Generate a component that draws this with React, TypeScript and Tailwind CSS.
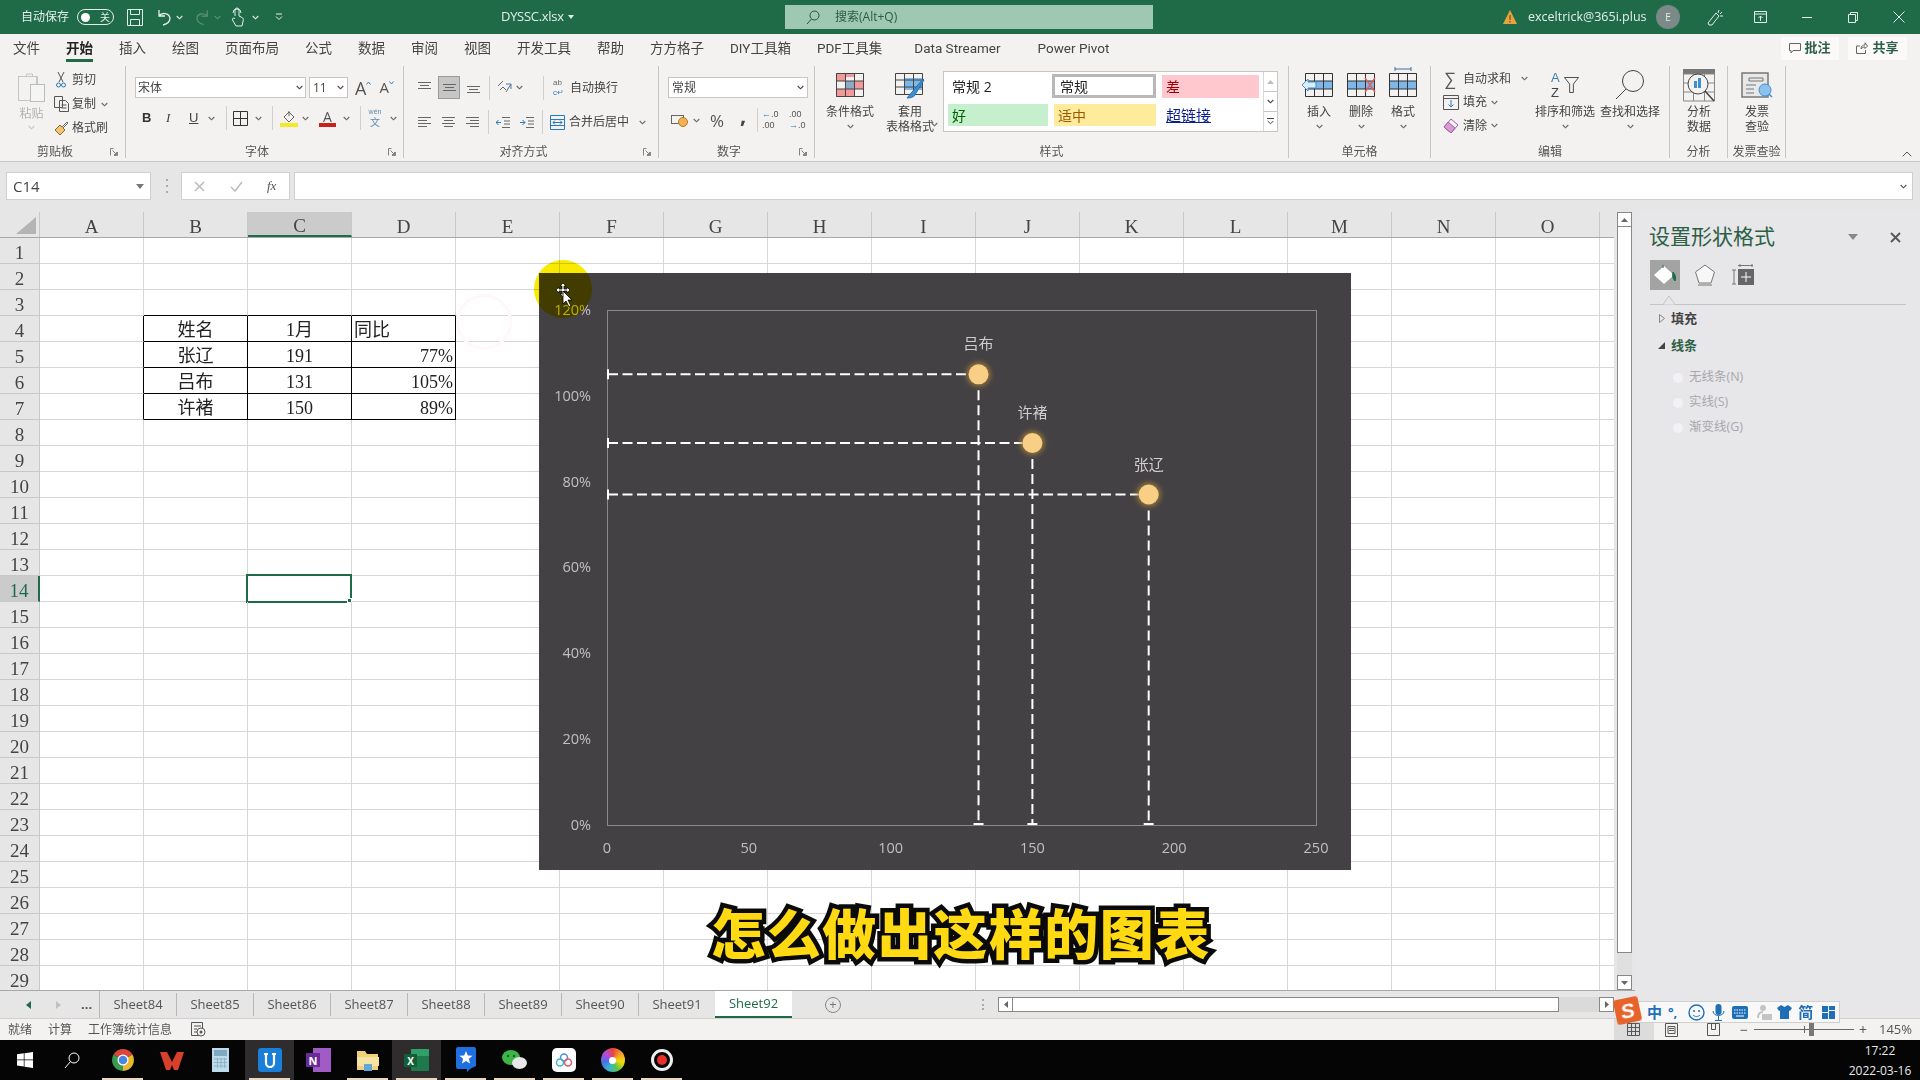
import type { ReactNode } from "react";

const columns = ["A", "B", "C", "D", "E", "F", "G", "H", "I", "J", "K", "L", "M", "N", "O", ""];
const rows = Array.from({ length: 29 }, (_, i) => i + 1);
const sheets = ["Sheet84", "Sheet85", "Sheet86", "Sheet87", "Sheet88", "Sheet89", "Sheet90", "Sheet91"];

const tableData: Record<string, { text: string; align: string }> = {
  "4-1": { text: "姓名", align: "justify-center" },
  "4-2": { text: "1月", align: "justify-center" },
  "4-3": { text: "同比", align: "justify-start" },
  "5-1": { text: "张辽", align: "justify-center" },
  "5-2": { text: "191", align: "justify-center" },
  "5-3": { text: "77%", align: "justify-end" },
  "6-1": { text: "吕布", align: "justify-center" },
  "6-2": { text: "131", align: "justify-center" },
  "6-3": { text: "105%", align: "justify-end" },
  "7-1": { text: "许褚", align: "justify-center" },
  "7-2": { text: "150", align: "justify-center" },
  "7-3": { text: "89%", align: "justify-end" },
};

function Chev({ color = "#666" }: { color?: string }) {
  return (
    <svg width="7" height="5" viewBox="0 0 7 5" className="shrink-0">
      <path d="M.7 1l2.8 2.8L6.3 1" stroke={color} strokeWidth="1.1" fill="none" />
    </svg>
  );
}

function Launcher() {
  return (
    <svg width="8" height="8" viewBox="0 0 8 8" className="shrink-0">
      <path d="M.5 7.5v-7h3M7.5 4v3.5H4M2.5 2.5l4 4M6.5 4v2.5H4" stroke="#777" fill="none" strokeWidth=".9" />
    </svg>
  );
}

function Sep() {
  return <div className="w-px h-[24px] bg-[#d2d0ce] shrink-0" />;
}

function Group({ w, title, launcher, children }: { w: string; title: string; launcher?: boolean; children: ReactNode }) {
  return (
    <div className={`${w} h-[92px] shrink-0 flex flex-col border-r border-[#c8c6c4]`}>
      <div className="h-[76px] shrink-0 flex relative">{children}</div>
      <div className="flex items-center h-[16px] pt-[4px]">
        <div className="flex-1 text-center text-[12px] leading-none text-[#555] whitespace-nowrap">{title}</div>
        {launcher && (
          <div className="w-[15px] flex">
            <Launcher />
          </div>
        )}
      </div>
    </div>
  );
}

function BigBtn({ w, icon, lines, chev }: { w: string; icon: ReactNode; lines: string[]; chev?: boolean }) {
  return (
    <div className={`${w} flex flex-col items-center shrink-0`}>
      <div className="h-[38px] flex items-center justify-center">{icon}</div>
      {lines.map((l) => (
        <div key={l} className="text-[12px] leading-[15px] whitespace-nowrap text-[#444]">
          {l}
        </div>
      ))}
      {chev && (
        <div className="h-[15px] flex items-center">
          <Chev />
        </div>
      )}
    </div>
  );
}

function AlignLines({ kind }: { kind: string }) {
  const d: Record<string, string> = {
    top: "M1 1.5h13M3 4.5h9M1 7.5h13",
    mid: "M1 3.5h13M3 6.5h9M1 9.5h13",
    bot: "M1 5.5h13M3 8.5h9M1 11.5h13",
    left: "M1 1.5h13M1 4.5h9M1 7.5h13M1 10.5h9",
    center: "M1 1.5h13M3 4.5h9M1 7.5h13M3 10.5h9",
    right: "M1 1.5h13M5 4.5h9M1 7.5h13M5 10.5h9",
  };
  return (
    <svg width="15" height="13" viewBox="0 0 15 13" className="shrink-0">
      <path d={d[kind]} stroke="#666" fill="none" />
    </svg>
  );
}

function Cells({ fill, mark }: { fill: string; mark?: ReactNode }) {
  return (
    <svg width="32" height="24" viewBox="0 0 32 24" className="overflow-visible">
      <rect x="2" y="8" width="28" height="8" fill={fill} />
      <path d="M2.5 .5h27v23h-27zM2 8h28M2 16h28M11.5 0v24M20.5 0v24" stroke="#333" fill="none" />
      {mark}
    </svg>
  );
}

function Titlebar() {
  return (
    <div className="h-[34px] bg-[#1f6b48] flex items-center shrink-0 text-[#e4eee9] relative">
      <span className="ml-[21px] text-[12px] w-[48px] whitespace-nowrap">自动保存</span>
      <div className="ml-[8px] w-[37px] h-[16px] rounded-full border border-[#e4eee9] flex items-center justify-between pl-[3px] pr-[3px]">
        <div className="w-[9px] h-[9px] rounded-full bg-white" />
        <span className="text-[10px] leading-none">关</span>
      </div>
      <svg className="ml-[13px]" width="16" height="17" viewBox="0 0 16 17">
        <path d="M.5.5h15v16H.5zM3.5.5v5h9v-5M3.5 16.5v-6h9v6" stroke="#e4eee9" fill="none" />
      </svg>
      <svg className="ml-[12px]" width="16" height="17" viewBox="0 0 16 17">
        <path d="M4 1v6h6M4 7c3-4 10-3 11 2 0 4-3 6-7 7" stroke="#e4eee9" fill="none" strokeWidth="1.3" />
      </svg>
      <div className="ml-[5px]">
        <Chev color="#e4eee9" />
      </div>
      <svg className="ml-[13px] opacity-30" width="15" height="17" viewBox="0 0 16 17">
        <path d="M12 1v6H6M12 7C9 3 2 4 1 9c0 4 3 6 7 7" stroke="#e4eee9" fill="none" strokeWidth="1.3" />
      </svg>
      <div className="ml-[3px] opacity-30">
        <Chev color="#e4eee9" />
      </div>
      <svg className="ml-[10px]" width="13" height="20" viewBox="0 0 13 20">
        <path d="M4 9V3a2 2 0 014 0v6l3 1.5c1 .5 1.5 1.5 1.3 2.5L11 19H5L1.5 13c-.8-1.5 1-2.5 2.5-1.5M2 6a4 4 0 018 0" stroke="#e4eee9" fill="none" />
      </svg>
      <div className="ml-[8px]">
        <Chev color="#e4eee9" />
      </div>
      <svg className="ml-[16px]" width="8" height="8" viewBox="0 0 8 8">
        <path d="M1 1h6M1 3.5l3 3 3-3" stroke="#e4eee9" fill="none" />
      </svg>
      <span className="ml-[218px] text-[13px] tracking-[-.3px] w-[62px] whitespace-nowrap">DYSSC.xlsx</span>
      <div className="ml-[5px]">
        <svg width="6" height="4" viewBox="0 0 6 4">
          <path d="M0 0h6L3 4z" fill="#e4eee9" />
        </svg>
      </div>
      <div className="ml-[211px] w-[368px] h-[24px] bg-[#9ec8b1] flex items-center shrink-0">
        <svg className="ml-[21px]" width="14" height="15" viewBox="0 0 14 15">
          <circle cx="8.5" cy="5.5" r="4.5" stroke="#23563d" fill="none" />
          <path d="M5.5 9L1 14" stroke="#23563d" />
        </svg>
        <span className="ml-[15px] text-[12px] text-[#2c5c43]">搜索(Alt+Q)</span>
      </div>
      <svg className="ml-[350px]" width="14" height="14" viewBox="0 0 14 14">
        <path d="M7 0l7 14H0z" fill="#e7a33e" />
        <path d="M7 5v5M7 11v1.5" stroke="#5a3b10" />
      </svg>
      <span className="ml-[11px] text-[12.5px] w-[117px] whitespace-nowrap">exceltrick@365i.plus</span>
      <div className="ml-[11px] w-[24px] h-[24px] rounded-full bg-[#7b8a88] flex items-center justify-center text-[10px]">E</div>
      <svg className="ml-[27px]" width="17" height="17" viewBox="0 0 17 17">
        <path d="M1 14l8-10 3 3-7 9H2zM12 1l-1 3M15 3l-2 2M16 7h-3" stroke="#e4eee9" fill="none" />
      </svg>
      <svg className="ml-[30px]" width="13" height="12" viewBox="0 0 13 12">
        <path d="M.5.5h12v11H.5zM.5 3h12M6.5 10V5M4.5 7l2-2 2 2" stroke="#e4eee9" fill="none" />
      </svg>
      <div className="ml-[35px] w-[10px] h-px bg-[#e4eee9]" />
      <svg className="ml-[36px]" width="10" height="11" viewBox="0 0 10 11">
        <path d="M.5 2.5h7v8h-7zM2.5 2.5v-2h7v8h-2" stroke="#e4eee9" fill="none" />
      </svg>
      <svg className="ml-[35px]" width="12" height="12" viewBox="0 0 12 12">
        <path d="M.5.5l11 11M11.5.5l-11 11" stroke="#e4eee9" />
      </svg>
    </div>
  );
}

function TabRow() {
  const tabs = ["文件", "开始", "插入", "绘图", "页面布局", "公式", "数据", "审阅", "视图", "开发工具", "帮助", "方方格子", "DIY工具箱", "PDF工具集"];
  return (
    <div className="h-[28px] flex items-stretch pl-[13px] gap-[26px] text-[13.5px] text-[#444] whitespace-nowrap [font-family:'Roboto','Noto_Sans_CJK_SC',sans-serif]">
      {tabs.map((t) => (
        <div
          key={t}
          className={`flex items-center pt-[3px] border-b-[3px] ${t === "开始" ? "border-[#1f6b48] font-bold text-[#222]" : "border-transparent"}`}
        >
          {t}
        </div>
      ))}
      <div className="flex items-center pt-[3px] border-b-[3px] border-transparent ml-[6px]">Data Streamer</div>
      <div className="flex items-center pt-[3px] border-b-[3px] border-transparent ml-[11px]">Power Pivot</div>
      <div className="ml-auto mr-[13px] flex items-center gap-[9px] text-[13px] font-bold text-[#2d5e47]">
        <div className="w-[58px] h-[23px] bg-[#fbfaf9] flex items-center justify-center gap-[3px]">
          <svg width="12" height="11" viewBox="0 0 12 11">
            <path d="M.5.5h11v7H4l-2 2.5v-2.5H.5z" stroke="#666" fill="none" />
          </svg>
          批注
        </div>
        <div className="w-[59px] h-[23px] bg-[#fbfaf9] flex items-center justify-center gap-[4px]">
          <svg width="12" height="12" viewBox="0 0 12 12">
            <path d="M4 4H.5v7.5h9V8M5 7c0-3 2-4 4-4V.8L11.5 4 9 6.5V5C7.5 5 6 5.5 5 7z" stroke="#666" fill="none" />
          </svg>
          共享
        </div>
      </div>
    </div>
  );
}

function Ribbon() {
  return (
    <div className="h-[100px] flex pt-[4px] text-[12px] text-[#444] relative border-b border-[#c8c6c4]">
      <Group w="w-[126px]" title="剪贴板" launcher>
        <div className="w-[43px] ml-[10px] flex flex-col items-center opacity-60">
          <svg className="mt-[6px]" width="27" height="30" viewBox="0 0 27 30">
            <path d="M3.5 4.5h5V2h6v2.5h5v8" stroke="#aaa" fill="#f3f2f1" />
            <rect x=".5" y="4.5" width="18" height="24" stroke="#aaa" fill="none" />
            <rect x="12.5" y="12.5" width="14" height="17" stroke="#999" fill="#f8f8f8" />
          </svg>
          <span className="mt-[4px] text-[12px] leading-[15px] text-[#888]">粘贴</span>
          <div className="mt-[4px]">
            <Chev color="#aaa" />
          </div>
        </div>
        <div className="ml-[1px] pt-[2px] flex flex-col">
          <div className="h-[24px] flex items-center">
            <svg className="ml-[2px]" width="10" height="16" viewBox="0 0 10 16">
              <path d="M2 0l5 10M8 0L3 10" stroke="#555" fill="none" />
              <circle cx="2.5" cy="13" r="2" stroke="#2a7ab8" fill="none" />
              <circle cx="7.5" cy="13" r="2" stroke="#2a7ab8" fill="none" />
            </svg>
            <span className="ml-[6px]">剪切</span>
          </div>
          <div className="h-[24px] flex items-center">
            <svg width="15" height="16" viewBox="0 0 15 16">
              <path d="M.5.5h8v11h-8zM5.5 4.5h6l3 3v8h-9zM7.5 9h5M7.5 12h5" stroke="#555" fill="#f3f2f1" />
            </svg>
            <span className="ml-[3px]">复制</span>
            <div className="ml-[5px]">
              <Chev />
            </div>
          </div>
          <div className="h-[24px] flex items-center">
            <svg width="15" height="15" viewBox="0 0 15 15">
              <path d="M1 9l5-5 5 5-5 5z" fill="#f2c66f" stroke="#8a6a2a" />
              <path d="M8 6l5-5 1 1-5 5" fill="#fff" stroke="#666" />
            </svg>
            <span className="ml-[3px]">格式刷</span>
          </div>
        </div>
      </Group>

      <Group w="w-[278px]" title="字体" launcher>
        <div className="flex flex-col pt-[11px]">
          <div className="flex items-center h-[21px]">
            <div className="ml-[9px] w-[171px] h-[21px] bg-white border border-[#c8c6c4] flex items-center justify-between px-[2px] text-[12px]">
              宋体
              <Chev color="#444" />
            </div>
            <div className="ml-[3px] w-[39px] h-[21px] bg-white border border-[#c8c6c4] flex items-center justify-between pl-[3px] pr-[3px] text-[12px]">
              11
              <Chev color="#444" />
            </div>
            <span className="ml-[7px] text-[18px] leading-none text-[#555]">A</span>
            <svg className="mb-[10px]" width="5" height="4" viewBox="0 0 5 4">
              <path d="M.5 3.5l2-2.5 2 2.5" stroke="#3b7fb5" fill="none" />
            </svg>
            <span className="ml-[8px] text-[15px] leading-none text-[#555]">A</span>
            <svg className="mb-[10px]" width="5" height="4" viewBox="0 0 5 4">
              <path d="M.5.5l2 2.5 2-2.5" stroke="#3b7fb5" fill="none" />
            </svg>
          </div>
          <div className="flex items-center h-[24px] mt-[8px]">
            <span className="ml-[16px] w-[8px] font-bold text-[13px] text-[#333] [font-family:'Liberation_Sans',sans-serif]">B</span>
            <span className="ml-[16px] w-[7px] italic text-[13px] [font-family:'Liberation_Serif',serif]">I</span>
            <span className="ml-[16px] w-[9px] underline text-[13px] [font-family:'Liberation_Sans',sans-serif]">U</span>
            <div className="ml-[10px]">
              <Chev />
            </div>
            <div className="ml-[11px]">
              <Sep />
            </div>
            <svg className="ml-[6px]" width="15" height="15" viewBox="0 0 15 15">
              <path d="M.5.5h14v14H.5zM7.5 0v15M0 7.5h15" stroke="#333" fill="none" />
            </svg>
            <div className="ml-[7px]">
              <Chev />
            </div>
            <div className="ml-[10px]">
              <Sep />
            </div>
            <svg className="ml-[7px]" width="18" height="17" viewBox="0 0 18 17">
              <path d="M4 7l5-5 5 5-5 5z" stroke="#666" fill="none" />
              <path d="M9 1v5" stroke="#666" />
              <rect y="13" width="18" height="4" fill="#f5e829" />
            </svg>
            <div className="ml-[4px]">
              <Chev />
            </div>
            <div className="ml-[10px] w-[17px] flex flex-col items-center leading-none">
              <span className="text-[14px] leading-[13px] text-[#555]">A</span>
              <div className="w-[17px] h-[4px] bg-[#c9201c]" />
            </div>
            <div className="ml-[7px]">
              <Chev />
            </div>
            <div className="ml-[10px]">
              <Sep />
            </div>
            <div className="ml-[7px] w-[14px] flex flex-col items-center text-[#5a8bb0] [font-family:'Liberation_Sans','Noto_Sans_CJK_SC',sans-serif]">
              <span className="text-[7px] leading-[9px]">wén</span>
              <span className="text-[10px] leading-[14px]">文</span>
            </div>
            <div className="ml-[8px]">
              <Chev />
            </div>
          </div>
        </div>
      </Group>

      <Group w="w-[255px]" title="对齐方式" launcher>
        <div className="flex flex-col pt-[10px]">
          <div className="flex items-center h-[23px]">
            <div className="ml-[13px]">
              <AlignLines kind="top" />
            </div>
            <div className="ml-[6px] w-[22px] h-[23px] bg-[#c6c6c6] border border-[#9a9a9a] flex items-center justify-center">
              <AlignLines kind="mid" />
            </div>
            <div className="ml-[6px]">
              <AlignLines kind="bot" />
            </div>
            <div className="ml-[8px]">
              <Sep />
            </div>
            <svg className="ml-[7px]" width="15" height="15" viewBox="0 0 15 15">
              <path d="M1 6l5-5M3 10l3-3 3 3M9 12l5-8" stroke="#666" fill="none" />
              <path d="M9 4h5v5" stroke="#3b7fb5" fill="none" />
            </svg>
            <div className="ml-[4px]">
              <Chev />
            </div>
            <div className="ml-[20px]">
              <Sep />
            </div>
            <div className="ml-[9px] w-[15px] text-[8px] leading-[10px] text-[#666] [font-family:'Liberation_Sans',sans-serif]">
              ab
              <br />
              <span className="text-[#3b7fb5]">c↵</span>
            </div>
            <span className="ml-[2px] whitespace-nowrap">自动换行</span>
          </div>
          <div className="flex items-center h-[24px] mt-[11px]">
            <div className="ml-[13px]">
              <AlignLines kind="left" />
            </div>
            <div className="ml-[9px]">
              <AlignLines kind="center" />
            </div>
            <div className="ml-[9px]">
              <AlignLines kind="right" />
            </div>
            <div className="ml-[8px]">
              <Sep />
            </div>
            <svg className="ml-[7px]" width="14" height="13" viewBox="0 0 14 13">
              <path d="M6 1.5h8M8 5h6M8 8h6M6 11.5h8" stroke="#666" />
              <path d="M5 6.5H0M2.5 4L0 6.5 2.5 9" stroke="#2a7ab8" fill="none" />
            </svg>
            <svg className="ml-[10px]" width="14" height="13" viewBox="0 0 14 13">
              <path d="M6 1.5h8M8 5h6M8 8h6M6 11.5h8" stroke="#666" />
              <path d="M0 6.5h5M2.5 4L5 6.5 2.5 9" stroke="#2a7ab8" fill="none" />
            </svg>
            <div className="ml-[8px]">
              <Sep />
            </div>
            <svg className="ml-[7px]" width="15" height="15" viewBox="0 0 15 15">
              <path d="M.5.5h14v14H.5zM0 4.5h15M0 10.5h15" stroke="#2a7ab8" fill="none" />
              <path d="M3 7.5h9M5 5.5l-2 2 2 2M10 5.5l2 2-2 2" stroke="#2a7ab8" fill="none" />
            </svg>
            <span className="ml-[4px] whitespace-nowrap">合并后居中</span>
            <div className="ml-[10px]">
              <Chev />
            </div>
          </div>
        </div>
      </Group>

      <Group w="w-[156px]" title="数字" launcher>
        <div className="flex flex-col pt-[11px] pl-[9px]">
          <div className="w-[140px] h-[21px] bg-white border border-[#c8c6c4] flex items-center justify-between px-[3px]">
            常规
            <Chev color="#444" />
          </div>
          <div className="flex items-center h-[24px] mt-[10px]">
            <svg className="ml-[3px]" width="17" height="15" viewBox="0 0 17 15">
              <rect x=".5" y="2.5" width="12" height="8" stroke="#666" fill="none" />
              <circle cx="12" cy="9" r="4.5" fill="#f1b155" stroke="#b87a20" />
            </svg>
            <div className="ml-[5px]">
              <Chev />
            </div>
            <span className="ml-[10px] w-[16px] text-[17px] leading-none text-[#555]">%</span>
            <span className="ml-[14px] w-[9px] text-[22px] font-bold leading-none text-[#444] pb-[12px]">,</span>
            <div className="ml-[8px]">
              <Sep />
            </div>
            <div className="ml-[4px] w-[18px] text-[9px] leading-[11px] text-[#555] [font-family:'Liberation_Sans',sans-serif]">
              <span className="text-[#2a7ab8]">←</span>.0
              <br />
              .00
            </div>
            <div className="ml-[9px] w-[16px] text-[9px] leading-[11px] text-[#555] [font-family:'Liberation_Sans',sans-serif]">
              .00
              <br />
              <span className="text-[#2a7ab8]">→</span>.0
            </div>
          </div>
        </div>
      </Group>

      <Group w="w-[474px]" title="样式">
        <div className="ml-[7px]">
          <BigBtn
            w="w-[56px]"
            lines={["条件格式"]}
            chev
            icon={
              <svg width="28" height="24" viewBox="0 0 28 24">
                <path d="M0 0h9v8H0zM9 0h9v4H9zM0 16h18v8H0zM18 8h10v8H18z" fill="#f29a9a" />
                <rect x="9" y="8" width="9" height="8" fill="#8ea9c8" />
                <path d="M.5.5h27v23H.5zM0 8h28M0 16h28M9.5 0v24M18.5 0v24" stroke="#444" fill="none" />
              </svg>
            }
          />
        </div>
        <div className="ml-[2px]">
          <BigBtn
            w="w-[60px]"
            lines={["套用", "表格格式"]}
            icon={
              <svg width="30" height="28" viewBox="0 0 30 28">
                <rect x="10" y="7" width="18" height="12" fill="#7db7ea" />
                <path d="M.5 2.5h27v21H.5zM0 9h28M0 16h28M9.5 2v22M18.5 2v22" stroke="#444" fill="none" />
                <path d="M28 8L17 21l-5 6c4 0 8-1 9-5l8-13z" fill="#3d8fd1" stroke="#2a6fa8" />
              </svg>
            }
          />
        </div>
        <div className="absolute left-[116px] top-[56px]">
          <Chev />
        </div>
        <div className="ml-[3px] mt-[5px] w-[335px] h-[61px] bg-white border border-[#c8c6c4] flex">
          <div className="w-[320px] pl-[4px] pt-[3px] grid grid-cols-[100px_108px_99px] grid-rows-[23px_22px] gap-y-[6px] gap-x-[2px] text-[14px]">
            <div className="flex items-center pl-[4px] text-[#222]">常规 2</div>
            <div className="flex items-center pl-[5px] text-[#222] border-[3px] border-[#b8b8b8] bg-white -mt-[1px] ml-[2px] mr-[2px]">常规</div>
            <div className="flex items-center pl-[4px] bg-[#ffc7ce] text-[#9c0006] ml-[2px]">差</div>
            <div className="flex items-center pl-[4px] bg-[#c6efce] text-[#006100]">好</div>
            <div className="flex items-center pl-[4px] bg-[#ffeb9c] text-[#9c5700] ml-[4px] mr-[2px]">适中</div>
            <div className="flex items-center pl-[4px] text-[15px] text-[#0b1f8a] underline ml-[2px]">超链接</div>
          </div>
          <div className="w-[14px] flex flex-col border-l border-[#d8d8d8]">
            <div className="flex-1 flex items-center justify-center">
              <svg width="7" height="4" viewBox="0 0 7 4">
                <path d="M0 4h7L3.5 0z" fill="#bbb" />
              </svg>
            </div>
            <div className="flex-1 flex items-center justify-center border-y border-[#c8c6c4]">
              <Chev color="#444" />
            </div>
            <div className="flex-1 flex items-center justify-center">
              <svg width="7" height="7" viewBox="0 0 7 7">
                <path d="M0 .5h7M.7 3l2.8 2.8L6.3 3" stroke="#444" fill="none" />
              </svg>
            </div>
          </div>
        </div>
      </Group>

      <Group w="w-[142px]" title="单元格">
        <div className="ml-[9px] flex">
          <BigBtn
            w="w-[42px]"
            lines={["插入"]}
            chev
            icon={<Cells fill="#7db7ea" mark={<path d="M-1 12l6-6v3h8v6H5v3z" fill="#dcecf8" stroke="#3d8fd1" />} />}
          />
          <BigBtn
            w="w-[42px]"
            lines={["删除"]}
            chev
            icon={<Cells fill="#7db7ea" mark={<path d="M20 5l10 14M30 5L20 19" stroke="#e0605a" strokeWidth="1.5" />} />}
          />
          <BigBtn
            w="w-[42px]"
            lines={["格式"]}
            chev
            icon={<Cells fill="#7db7ea" mark={<path d="M8 -4h16M8 -6v4M24 -6v4" stroke="#3d6f9a" fill="none" />} />}
          />
        </div>
      </Group>

      <Group w="w-[239px]" title="编辑">
        <div className="ml-[12px] w-[92px] pt-[1px] flex flex-col">
          <div className="h-[23.5px] flex items-center">
            <span className="ml-[2px] w-[13px] text-[17px] leading-none text-[#555]">∑</span>
            <span className="ml-[5px] whitespace-nowrap">自动求和</span>
            <div className="ml-[10px]">
              <Chev />
            </div>
          </div>
          <div className="h-[23.5px] flex items-center">
            <svg width="16" height="15" viewBox="0 0 16 15">
              <path d="M.5.5h15v14H.5zM0 3.5h16" stroke="#555" fill="none" />
              <path d="M8 5v7M5.5 9.5L8 12l2.5-2.5" stroke="#2a7ab8" fill="none" />
            </svg>
            <span className="ml-[4px]">填充</span>
            <div className="ml-[4px]">
              <Chev />
            </div>
          </div>
          <div className="h-[23.5px] flex items-center">
            <svg width="16" height="15" viewBox="0 0 16 15">
              <path d="M1 9l7-8 7 6-7 8z" fill="#f3f2f1" stroke="#a35fa5" />
              <path d="M1 9l4-5 7 6-4 5z" fill="#d79bd7" stroke="#a35fa5" />
            </svg>
            <span className="ml-[4px]">清除</span>
            <div className="ml-[4px]">
              <Chev />
            </div>
          </div>
        </div>
        <BigBtn
          w="w-[60px]"
          lines={["排序和筛选"]}
          chev
          icon={
            <div className="flex items-center">
              <div className="w-[12px] text-[13px] leading-[15px] [font-family:'Liberation_Sans',sans-serif]">
                <span className="text-[#3b7fb5]">A</span>
                <br />Z
              </div>
              <svg className="ml-[1px]" width="15" height="18" viewBox="0 0 16 18">
                <path d="M.5 1h15L10 8v9H6V8z" stroke="#444" fill="none" />
              </svg>
            </div>
          }
        />
        <div className="ml-[5px]">
          <BigBtn
            w="w-[60px]"
            lines={["查找和选择"]}
            chev
            icon={
              <svg width="30" height="30" viewBox="0 0 30 30">
                <circle cx="18" cy="11" r="10.5" stroke="#444" fill="none" />
                <path d="M11 19L1 29" stroke="#444" />
              </svg>
            }
          />
        </div>
      </Group>

      <Group w="w-[58px]" title="分析">
        <BigBtn
          w="w-[58px]"
          lines={["分析", "数据"]}
          icon={
            <svg width="32" height="33" viewBox="0 0 32 33">
              <rect width="32" height="5" fill="#777" />
              <path d="M.5 5h31v27H.5zM0 14h32M0 23h32M10.5 5v27M21.5 5v27" stroke="#888" fill="none" />
              <circle cx="15" cy="15" r="10" fill="#f3f2f1" stroke="#444" />
              <path d="M11 12h3v7h-3zM15 9h3v10h-3z" fill="#3d8fd1" />
              <path d="M22 22l9 10" stroke="#444" strokeWidth="1.5" />
            </svg>
          }
        />
      </Group>

      <Group w="w-[58px]" title="发票查验">
        <BigBtn
          w="w-[58px]"
          lines={["发票", "查验"]}
          icon={
            <svg width="32" height="26" viewBox="0 0 32 26">
              <rect x="1" y="1" width="26" height="24" fill="#e8e8e8" stroke="#777" strokeWidth="1.5" />
              <path d="M8 6h14v3H8zM5 13h10M5 17h8M5 21h8" stroke="#777" fill="none" />
              <circle cx="24" cy="18" r="6" fill="#8cc3ee" stroke="#3d8fd1" />
              <path d="M28 22l3 3" stroke="#3d8fd1" strokeWidth="1.5" />
            </svg>
          }
        />
      </Group>

      <svg className="absolute right-[8px] bottom-[4px]" width="10" height="6" viewBox="0 0 10 6">
        <path d="M.7 5.3L5 1l4.3 4.3" stroke="#555" fill="none" />
      </svg>
    </div>
  );
}

function FormulaBar() {
  return (
    <div className="h-[50px] bg-[#e6e6e6] flex items-start pt-[10px] shrink-0">
      <div className="ml-[6px] w-[145px] h-[28px] bg-white border border-[#cfcfcf] flex items-center justify-between pl-[6px] pr-[6px] text-[15px] text-[#444]">
        C14
        <svg width="8" height="5" viewBox="0 0 8 5">
          <path d="M0 0h8L4 5z" fill="#777" />
        </svg>
      </div>
      <div className="ml-[14px] w-[3px] h-[14px] mt-[7px] flex flex-col justify-between items-center">
        <div className="w-[2px] h-[2px] bg-[#aaa]" />
        <div className="w-[2px] h-[2px] bg-[#aaa]" />
        <div className="w-[2px] h-[2px] bg-[#aaa]" />
      </div>
      <div className="ml-[13px] w-[109px] h-[28px] bg-white border border-[#cfcfcf] flex items-center text-[#bbb]">
        <svg className="ml-[12px]" width="11" height="11" viewBox="0 0 11 11">
          <path d="M1 1l9 9M10 1l-9 9" stroke="#bbb" strokeWidth="1.5" />
        </svg>
        <svg className="ml-[25px]" width="13" height="11" viewBox="0 0 13 11">
          <path d="M1 6l4 4 7-9" stroke="#bbb" strokeWidth="1.5" fill="none" />
        </svg>
        <span className="ml-[24px] italic text-[13px] text-[#555] [font-family:'Liberation_Serif',serif]">fx</span>
      </div>
      <div className="ml-[4px] w-[1619px] h-[28px] bg-white border border-[#cfcfcf] flex items-center justify-end pr-[5px]">
        <Chev color="#555" />
      </div>
    </div>
  );
}

function Grid() {
  const serif = "[font-family:'Liberation_Serif','Noto_Sans_CJK_SC',serif]";
  return (
    <div className={`flex-1 overflow-hidden bg-white ${serif}`}>
      <div className="flex h-[26px] bg-[#e6e6e6] border-b border-[#a8a8a8]">
        <div className="w-[40px] shrink-0 border-r border-[#c8c8c8] flex items-end justify-end pr-[3px] pb-[3px]">
          <svg width="20" height="17" viewBox="0 0 20 17">
            <path d="M20 0v17H0z" fill="#b4b4b4" />
          </svg>
        </div>
        {columns.map((c) => (
          <div
            key={c}
            className={`w-[104px] shrink-0 flex items-center justify-center pt-[5px] text-[19px] text-[#444] border-r ${
              c === "C" ? "bg-[#cbcbcb] border-b-2 border-b-[#1f6b48] border-r-[#c8c8c8]" : "border-[#c8c8c8]"
            }`}
          >
            {c}
          </div>
        ))}
      </div>
      {rows.map((r) => (
        <div key={r} className="flex h-[26px]">
          <div
            className={`w-[40px] shrink-0 flex items-center justify-center pt-[5px] text-[19px] border-r border-b border-[#c8c8c8] ${
              r === 14 ? "bg-[#cbcbcb] text-[#1f6b48] border-r-2 border-r-[#1f6b48]" : "bg-[#e6e6e6] text-[#444]"
            }`}
          >
            {r}
          </div>
          {columns.map((_, c) => {
            const inTable = r >= 4 && r <= 7 && c >= 1 && c <= 3;
            const blackBottom = inTable || (r === 3 && c >= 1 && c <= 3);
            const blackRight = inTable || (c === 0 && r >= 4 && r <= 7);
            const cell = tableData[`${r}-${c}`];
            const active = r === 14 && c === 2;
            return (
              <div
                key={c}
                className={`w-[104px] shrink-0 relative flex items-center px-[2px] pt-[4px] text-[18px] text-[#222] border-r border-b ${
                  blackBottom ? "border-b-black" : "border-b-[#d6d6d6]"
                } ${blackRight ? "border-r-black" : "border-r-[#d6d6d6]"} ${cell ? cell.align : ""}`}
              >
                {cell ? cell.text : ""}
                {active && (
                  <div className="absolute -left-[2px] -top-[2px] w-[106px] h-[29px] border-2 border-[#1f6b48]">
                    <div className="absolute -right-[2px] -bottom-[2px] w-[5px] h-[5px] bg-[#1f6b48] border border-white" />
                  </div>
                )}
              </div>
            );
          })}
        </div>
      ))}
    </div>
  );
}

function Chart() {
  const X = (v: number) => 68 + v * 2.836;
  const Y = (p: number) => 552 - p * 4.292;
  const points = [
    { name: "吕布", v: 131, p: 105 },
    { name: "许褚", v: 150, p: 89 },
    { name: "张辽", v: 191, p: 77 },
  ];
  return (
    <div className="absolute left-[539px] top-[61px] w-[812px] h-[597px] bg-[#444144]">
      <svg width="812" height="597" viewBox="0 0 812 597" className="[font-family:'Open_Sans','Noto_Sans_CJK_SC',sans-serif]">
        <defs>
          <filter id="glow" x="-50%" y="-50%" width="200%" height="200%">
            <feGaussianBlur stdDeviation="2.5" />
          </filter>
        </defs>
        <rect x="68.5" y="37.5" width="709" height="515" fill="none" stroke="#8a888a" />
        {[120, 100, 80, 60, 40, 20, 0].map((p, i) => (
          <text key={p} x="52" y={37 + i * 85.83 + 5} fontSize="14.5" fill="#c0bec0" textAnchor="end">
            {p}%
          </text>
        ))}
        {[0, 50, 100, 150, 200, 250].map((v) => (
          <text key={v} x={X(v)} y="580" fontSize="14.5" fill="#c0bec0" textAnchor="middle">
            {v}
          </text>
        ))}
        {points.map((pt) => (
          <g key={pt.name}>
            <path d={`M69 ${Y(pt.p)}H${X(pt.v) - 10}`} stroke="#fff" strokeWidth="2" strokeDasharray="10 4.5" fill="none" />
            <path d={`M69 ${Y(pt.p) - 5}v10`} stroke="#fff" strokeWidth="2" />
            <path d={`M${X(pt.v)} ${Y(pt.p) + 16}V552`} stroke="#fff" strokeWidth="2" strokeDasharray="10 5" fill="none" />
            <path d={`M${X(pt.v) - 5} 551h10`} stroke="#fff" strokeWidth="2" />
            <circle cx={X(pt.v)} cy={Y(pt.p)} r="12" fill="#a8823a" opacity=".8" filter="url(#glow)" />
            <circle cx={X(pt.v)} cy={Y(pt.p)} r="10" fill="#f8cf85" />
            <text x={X(pt.v)} y={Y(pt.p) - 25} fontSize="15" fill="#cfcdcf" textAnchor="middle">
              {pt.name}
            </text>
          </g>
        ))}
      </svg>
    </div>
  );
}

function SheetBar() {
  return (
    <div className="h-[28px] shrink-0 bg-[#e6e6e6] flex items-stretch text-[13px] text-[#555] border-t border-[#a8a8a8]">
      <div className="w-[100px] flex items-center shrink-0 border-r border-[#b8b8b8]">
        <svg className="ml-[26px]" width="5" height="8" viewBox="0 0 5 8">
          <path d="M5 0v8L0 4z" fill="#1f6b48" />
        </svg>
        <svg className="ml-[25px]" width="5" height="8" viewBox="0 0 5 8">
          <path d="M0 0v8l5-4z" fill="#c0c0c0" />
        </svg>
        <span className="ml-[20px] font-bold leading-none">...</span>
      </div>
      {sheets.map((s) => (
        <div key={s} className="w-[77px] shrink-0 flex items-center justify-center border-r border-[#b8b8b8] my-[2px]">
          {s}
        </div>
      ))}
      <div className="w-[77px] shrink-0 bg-white text-[#1f6b48] flex items-center justify-center border-b-2 border-[#1f6b48] -ml-px">Sheet92</div>
      <div className="ml-[33px] w-[16px] h-[16px] self-center rounded-full border border-[#888] flex items-center justify-center text-[13px] leading-none text-[#777]">
        +
      </div>
      <div className="ml-[140px] w-[3px] h-[11px] self-center flex flex-col justify-between items-center">
        <div className="w-[2px] h-[2px] bg-[#aaa]" />
        <div className="w-[2px] h-[2px] bg-[#aaa]" />
        <div className="w-[2px] h-[2px] bg-[#aaa]" />
      </div>
      <div className="ml-[14px] w-[616px] h-[15px] self-center flex bg-[#dadada]">
        <div className="w-[15px] bg-white border border-[#888] flex items-center justify-center">
          <svg width="4" height="7" viewBox="0 0 4 7">
            <path d="M4 0v7L0 3.5z" fill="#666" />
          </svg>
        </div>
        <div className="w-[546px] bg-white border-y border-r border-[#888]" />
        <div className="flex-1" />
        <div className="w-[15px] bg-white border border-[#888] flex items-center justify-center">
          <svg width="4" height="7" viewBox="0 0 4 7">
            <path d="M0 0v7l4-3.5z" fill="#666" />
          </svg>
        </div>
      </div>
    </div>
  );
}

function StatusBar() {
  return (
    <div className="h-[22px] shrink-0 bg-[#f3f2f1] flex items-center text-[12px] text-[#555] border-t border-[#d2d0ce]">
      <span className="ml-[8px]">就绪</span>
      <span className="ml-[16px]">计算</span>
      <span className="ml-[16px]">工作簿统计信息</span>
      <svg className="ml-[19px]" width="15" height="15" viewBox="0 0 15 15">
        <path d="M.5.5h11v13H.5zM3 4h7M3 7h3M3 10h3" stroke="#555" fill="none" />
        <circle cx="10" cy="10" r="4" fill="#f3f2f1" stroke="#555" />
        <circle cx="10" cy="10" r="1.5" fill="#555" />
      </svg>
      <div className="ml-auto h-full w-[40px] bg-[#dcdcdc] flex items-center justify-center">
        <svg width="13" height="13" viewBox="0 0 13 13">
          <path d="M.5.5h12v12H.5zM4.5 0v13M8.5 0v13M0 4.5h13M0 8.5h13" stroke="#555" fill="none" />
        </svg>
      </div>
      <svg className="ml-[11px]" width="13" height="14" viewBox="0 0 13 14">
        <path d="M.5.5h12v13H.5zM3 3.5h7v7H3zM4 5.5h5M4 7.5h5" stroke="#555" fill="none" />
      </svg>
      <svg className="ml-[29px]" width="13" height="13" viewBox="0 0 13 13">
        <path d="M.5 12.5V.5h12v12zM4.5 0v6.5h4V0" stroke="#555" fill="none" />
      </svg>
      <span className="ml-[20px] text-[14px] leading-none">−</span>
      <div className="ml-[6px] w-[100px] h-px bg-[#666] relative">
        <div className="absolute left-[50px] -top-[3px] w-px h-[7px] bg-[#666]" />
        <div className="absolute left-[55px] -top-[6px] w-[5px] h-[13px] bg-[#777]" />
      </div>
      <span className="ml-[5px] text-[14px] leading-none">+</span>
      <span className="ml-[12px] mr-[8px] text-[13px] [font-family:'Open_Sans',sans-serif]">145%</span>
    </div>
  );
}

function TaskIcon({ children, active, mark }: { children: ReactNode; active?: boolean; mark?: boolean }) {
  return (
    <div className={`w-[49px] h-full relative flex items-center justify-center shrink-0 ${active ? "bg-[#2e2c2c]" : ""}`}>
      {children}
      {mark && <div className="absolute bottom-0 left-[4px] right-[4px] h-[2px] bg-[#ead9c2]" />}
    </div>
  );
}

function Taskbar() {
  return (
    <div className="h-[40px] shrink-0 bg-[#050505] flex items-stretch text-white relative">
      <TaskIcon>
        <svg width="16" height="16" viewBox="0 0 16 16">
          <path d="M0 2.3l6.8-1v6.2H0zM7.5 1.2L16 0v7.5H7.5zM0 8.3h6.8v6.3l-6.8-1zM7.5 8.3H16V16l-8.5-1.2z" fill="#fff" />
        </svg>
      </TaskIcon>
      <TaskIcon>
        <svg className="-ml-[3px]" width="16" height="17" viewBox="0 0 16 17">
          <circle cx="10" cy="6" r="5" stroke="#fff" fill="none" />
          <path d="M6.5 9.5L1 16" stroke="#fff" />
        </svg>
      </TaskIcon>
      <TaskIcon mark>
        <svg width="24" height="24" viewBox="0 0 24 24">
          <path d="M12 12L2.5 6.5A11 11 0 0121.5 6.5z" fill="#d9463a" />
          <path d="M12 12l9.5-5.5A11 11 0 0112 23z" fill="#e8b92f" />
          <path d="M12 12v11A11 11 0 012.5 6.5z" fill="#3c9a50" />
          <circle cx="12" cy="12" r="5.5" fill="#fff" />
          <circle cx="12" cy="12" r="4.3" fill="#4a85e0" />
        </svg>
      </TaskIcon>
      <TaskIcon>
        <svg width="24" height="20" viewBox="0 0 24 20">
          <path d="M0 2h7l5 10 5-10h7l-6 18h-4l-2-5-2 5H6z" fill="#d8402c" />
        </svg>
      </TaskIcon>
      <TaskIcon>
        <svg width="17" height="24" viewBox="0 0 17 24">
          <rect width="17" height="24" fill="#bcdcec" />
          <rect x="2" y="2" width="13" height="6" fill="#7fa9bf" />
          <path d="M2 11h13M2 14.5h13M2 18h13M5.5 10v10M9 10v10M12.5 10v10" stroke="#8fb3c6" />
        </svg>
      </TaskIcon>
      <TaskIcon active mark>
        <div className="w-[24px] h-[24px] rounded-[3px] bg-[#1a7fd8] flex items-center justify-center">
          <svg width="12" height="16" viewBox="0 0 12 16">
            <path d="M2 2v9a4 4 0 008 0V2M0 2h4M8 2h4" stroke="#fff" strokeWidth="2.2" fill="none" />
          </svg>
        </div>
      </TaskIcon>
      <TaskIcon>
        <svg width="25" height="24" viewBox="0 0 25 24">
          <rect x="7" width="18" height="24" fill="#a05bc4" />
          <rect x="0" y="5" width="14" height="14" fill="#6a2a9a" />
          <text x="7" y="16.5" fontSize="11" fill="#fff" textAnchor="middle" fontWeight="700">N</text>
        </svg>
      </TaskIcon>
      <TaskIcon mark>
        <svg width="22" height="21" viewBox="0 0 22 21">
          <path d="M0 1h8l2 3h11v16H0z" fill="#f0d078" />
          <rect x="0" y="7" width="22" height="9" fill="#f6e2a2" />
          <rect x="7" y="14" width="8" height="7" fill="#5fa8d8" />
        </svg>
      </TaskIcon>
      <TaskIcon active mark>
        <svg width="25" height="22" viewBox="0 0 25 22">
          <rect x="7" width="18" height="22" rx="1" fill="#1e7a4c" />
          <rect x="7" width="18" height="7" fill="#2fa06a" />
          <rect y="5" width="13" height="13" fill="#11603a" />
          <text x="6.5" y="15.5" fontSize="10" fill="#fff" textAnchor="middle" fontWeight="700">X</text>
        </svg>
      </TaskIcon>
      <TaskIcon mark>
        <svg width="20" height="26" viewBox="0 0 20 26">
          <path d="M0 2a2 2 0 012-2h16a2 2 0 012 2v17l-6 3-3 3v-3H2a2 2 0 01-2-2z" fill="#1f6fe0" />
          <path d="M10 4l1.8 4.5 4.7.3-3.6 3 1.2 4.700L10 14l-4.100 2.500 1.200-4.700-3.600-3 4.700-.3z" fill="#fff" />
        </svg>
      </TaskIcon>
      <TaskIcon mark>
        <svg width="25" height="22" viewBox="0 0 25 22">
          <ellipse cx="9" cy="8.5" rx="9" ry="7.5" fill="#3db54a" />
          <ellipse cx="17.5" cy="14" rx="7.5" ry="6" fill="#e8e8e8" />
          <circle cx="6" cy="7" r="1.2" fill="#155c20" />
          <circle cx="12" cy="7" r="1.2" fill="#155c20" />
        </svg>
      </TaskIcon>
      <TaskIcon mark>
        <div className="w-[24px] h-[24px] rounded-[5px] bg-white flex items-center justify-center">
          <svg width="18" height="14" viewBox="0 0 18 14">
            <circle cx="9" cy="4.5" r="3.5" stroke="#4a8fe0" strokeWidth="1.5" fill="none" />
            <circle cx="5" cy="9.5" r="3.5" stroke="#3fb7c9" strokeWidth="1.5" fill="none" />
            <circle cx="13" cy="9.5" r="3.5" stroke="#e05a6a" strokeWidth="1.5" fill="none" />
          </svg>
        </div>
      </TaskIcon>
      <TaskIcon mark>
        <div className="w-[24px] h-[24px] rounded-full bg-[conic-gradient(#e8443a,#f0a32c,#f5d90a,#5cc64a,#35b5d8,#4a6fe0,#b04ae0,#e8443a)] flex items-center justify-center">
          <div className="w-[7px] h-[7px] rounded-full bg-white" />
        </div>
      </TaskIcon>
      <TaskIcon mark>
        <div className="w-[22px] h-[22px] rounded-full border-[3px] border-[#eee] flex items-center justify-center">
          <div className="w-[10px] h-[10px] rounded-full bg-[#e8302a]" />
        </div>
      </TaskIcon>
      <div className="ml-auto mr-[7px] w-[66px] flex flex-col items-center text-[12px] leading-none text-[#e8e8e8] pt-[5px] gap-[8px]">
        <span>17:22</span>
        <span className="whitespace-nowrap">2022-03-16</span>
      </div>
    </div>
  );
}

function FormatPanel() {
  return (
    <div className="w-[285px] shrink-0 bg-[#e7e6e9] relative flex flex-col pl-[15px]">
      <div className="flex items-center h-[48px] pr-[17px] pt-[2px]">
        <span className="-ml-[1px] text-[21px] text-[#2b6045] whitespace-nowrap">设置形状格式</span>
        <svg className="ml-[73px]" width="10" height="6" viewBox="0 0 10 6">
          <path d="M0 0h10L5 6z" fill="#888" />
        </svg>
        <svg className="ml-[32px]" width="11" height="11" viewBox="0 0 11 11">
          <path d="M1 1l9 9M10 1l-9 9" stroke="#555" strokeWidth="1.8" />
        </svg>
      </div>
      <div className="flex items-center h-[30px]">
        <div className="w-[30px] h-[30px] bg-[#a3a3a3] flex items-center justify-center">
          <svg width="24" height="24" viewBox="0 0 24 24">
            <path d="M1 12l10-9 10 9-10 9z" fill="#fff" />
            <path d="M10 5V2M20 9c3 3 3 7 2 9-2-2-3-5-2-9z" stroke="#1f6b48" fill="#1f6b48" />
          </svg>
        </div>
        <svg className="ml-[14px]" width="22" height="24" viewBox="0 0 22 24">
          <path d="M11 2l9.5 7-3.5 11H5L1.5 9z" fill="#f7f7f7" stroke="#777" />
          <path d="M4 22h14" stroke="#777" />
        </svg>
        <svg className="ml-[16px]" width="22" height="22" viewBox="0 0 22 22">
          <path d="M6 1.5h15M0 6h4M0 20h4M2 6v14M8 0v3M20 0v3" stroke="#777" fill="none" />
          <rect x="6" y="5" width="16" height="16" fill="#666" />
          <path d="M14 8v10M9 13h10" stroke="#fff" />
        </svg>
      </div>
      <div className="mt-[14px] mr-[14px] h-px bg-[#c4c4c6] relative">
        <svg className="absolute left-[10px] -top-[9px]" width="18" height="10" viewBox="0 0 18 10">
          <path d="M0 9.5h3L9 1l6 8.5h3" stroke="#c4c4c6" fill="#e7e6e9" />
        </svg>
      </div>
      <div className="h-[27px] flex items-center text-[13px] font-bold text-[#444]">
        <svg className="ml-[9px]" width="6" height="9" viewBox="0 0 6 9">
          <path d="M.5.5v8l5-4z" stroke="#888" fill="none" />
        </svg>
        <span className="ml-[6px]">填充</span>
      </div>
      <div className="h-[27px] flex items-center text-[13px] font-bold text-[#2b6045]">
        <svg className="ml-[8px]" width="7" height="7" viewBox="0 0 7 7">
          <path d="M7 0v7H0z" fill="#444" />
        </svg>
        <span className="ml-[6px]">线条</span>
      </div>
      {["无线条(N)", "实线(S)", "渐变线(G)"].map((t, i) => (
        <div key={t} className={`flex items-center h-[25px] text-[12.5px] text-[#a8a8ac] ${i === 0 ? "mt-[6px]" : ""}`}>
          <div className="ml-[23px] w-[10px] h-[10px] rounded-full bg-[#f3f1f5]" />
          <span className="ml-[6px]">{t}</span>
        </div>
      ))}
    </div>
  );
}

function ImeBar() {
  return (
    <div className="absolute left-[1633px] top-[1001px] w-[207px] h-[22px] bg-[#f8f8f8] border border-[#cfcfcf] flex items-center text-[#1f6fb8]">
      <div className="absolute -left-[19px] -top-[4px] w-[25px] h-[25px] rounded-[3px] bg-[#e8632a] -rotate-12 flex items-center justify-center text-white text-[21px] font-bold leading-none [font-family:'Liberation_Sans',sans-serif] italic">
        S
      </div>
      <span className="ml-[13px] text-[15px] font-bold leading-none">中</span>
      <span className="ml-[6px] text-[13px] font-bold leading-none">°,</span>
      <svg className="ml-[11px]" width="17" height="17" viewBox="0 0 17 17">
        <circle cx="8.5" cy="8.5" r="7.5" stroke="#1f6fb8" strokeWidth="1.4" fill="none" />
        <circle cx="6" cy="7" r="1" fill="#1f6fb8" />
        <circle cx="11" cy="7" r="1" fill="#1f6fb8" />
        <path d="M5 11c2 2 5 2 7 0" stroke="#1f6fb8" fill="none" />
      </svg>
      <svg className="ml-[7px]" width="13" height="17" viewBox="0 0 13 17">
        <rect x="3.5" width="6" height="11" rx="3" fill="#1f6fb8" />
        <path d="M1 7c0 6 11 6 11 0M6.5 12v4M3 16.5h7" stroke="#1f6fb8" fill="none" />
      </svg>
      <svg className="ml-[7px]" width="16" height="13" viewBox="0 0 16 13">
        <rect width="16" height="13" rx="2" fill="#1f6fb8" />
        <path d="M2 4h12M2 7h12" stroke="#fff" strokeDasharray="1.5 1" />
        <path d="M4 10h8" stroke="#fff" />
      </svg>
      <svg className="ml-[8px]" width="16" height="16" viewBox="0 0 16 16">
        <circle cx="7" cy="4" r="3" fill="#c4c4c4" />
        <path d="M2 14c0-4 2-6 5-6" stroke="#c4c4c4" fill="none" strokeWidth="2" />
        <rect x="6" y="10" width="10" height="6" fill="#c4c4c4" />
      </svg>
      <svg className="ml-[5px]" width="15" height="14" viewBox="0 0 15 14">
        <path d="M4 0l3.5 2L11 0l4 3-2 3-1-.5V14H3V5.5L2 6 0 3z" fill="#1f6fb8" />
      </svg>
      <span className="ml-[6px] text-[15px] font-bold leading-none">简</span>
      <svg className="ml-[9px]" width="13" height="13" viewBox="0 0 13 13">
        <path d="M0 0h6v6H0zM7 0h6v4H7zM0 7h6v6H0zM7 5h6v8H7z" fill="#1f6fb8" />
      </svg>
    </div>
  );
}

export default function App() {
  return (
    <div className="relative w-[1920px] h-[1080px] overflow-hidden flex flex-col bg-[#f3f2f1] [font-family:'Open_Sans','Noto_Sans_CJK_SC',sans-serif]">
      <Titlebar />
      <TabRow />
      <Ribbon />
      <FormulaBar />
      <div className="flex-1 flex min-h-0">
        <div className="w-[1635px] shrink-0 flex flex-col relative bg-[#e6e6e6]">
          <div className="flex-1 flex min-h-0">
            <div className="w-[1614px] shrink-0 flex flex-col overflow-hidden">
              <Grid />
            </div>
            <div className="ml-[3px] w-[15px] flex flex-col bg-[#e0e0e0]">
              <div className="h-[15px] bg-white border border-[#888] flex items-center justify-center">
                <svg width="7" height="4" viewBox="0 0 7 4">
                  <path d="M0 4h7L3.5 0z" fill="#666" />
                </svg>
              </div>
              <div className="h-[726px] bg-white border-x border-b border-[#888]" />
              <div className="flex-1" />
              <div className="h-[15px] bg-white border border-[#888] flex items-center justify-center">
                <svg width="7" height="4" viewBox="0 0 7 4">
                  <path d="M0 0h7L3.5 4z" fill="#666" />
                </svg>
              </div>
            </div>
          </div>
          <SheetBar />
          <Chart />
          {/* faint ring and click highlight left by the screen recorder */}
          <div className="absolute left-[456px] top-[82px] w-[56px] h-[56px] rounded-full border-[3px] border-[#fef8f8]" />
          <div className="absolute left-[534px] top-[48px] w-[58px] h-[58px] rounded-full bg-[#f8ea00] mix-blend-multiply" />
          <svg className="absolute left-[554px] top-[71px]" width="22" height="26" viewBox="0 0 22 26">
            <path d="M9 0l3 3h-2v3h3V4l3 3-3 3V8h-3v3h2l-3 3-3-3h2V8H5v2L2 7l3-3v2h3V3H6z" fill="#fff" stroke="#000" strokeWidth=".7" />
            <path d="M9 8l0 13 3-3 3 6 2-1-3-6h4z" fill="#fff" stroke="#000" strokeWidth=".8" />
          </svg>
        </div>
        <FormatPanel />
      </div>
      <StatusBar />
      <Taskbar />
      <ImeBar />
      <div className="absolute left-[706px] top-[900px] w-[510px] text-center text-[54px] leading-[64px] font-black tracking-[1.5px] text-[#ffd912] whitespace-nowrap [-webkit-text-stroke:9px_#0a0a0a] [paint-order:stroke_fill] [font-family:'Noto_Sans_CJK_SC',sans-serif]">
        怎么做出这样的图表
      </div>
    </div>
  );
}
